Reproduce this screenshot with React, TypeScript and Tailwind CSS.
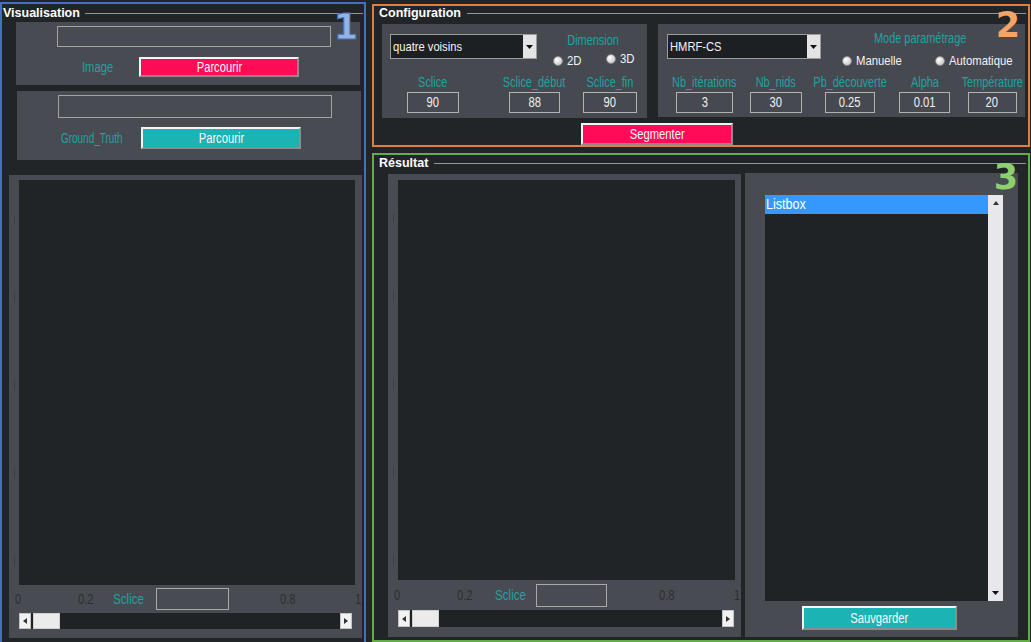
import React from "react";

function TriLeft() {
  return (
    <svg width="4" height="6" viewBox="0 0 4 6"><path d="M4 0 L0 3 L4 6 Z" fill="#333" /></svg>
  );
}
function TriRight() {
  return (
    <svg width="4" height="6" viewBox="0 0 4 6"><path d="M0 0 L4 3 L0 6 Z" fill="#333" /></svg>
  );
}
function TriUp() {
  return (
    <svg width="6" height="4" viewBox="0 0 6 4"><path d="M0 4 L3 0 L6 4 Z" fill="#333" /></svg>
  );
}
function TriDown() {
  return (
    <svg width="7" height="4" viewBox="0 0 7 4"><path d="M0 0 L7 0 L3.5 4 Z" fill="#111" /></svg>
  );
}

function Radio({ label }: { label: string }) {
  return (
    <div className="flex items-center gap-[4px]">
      <div className="w-[10px] h-[10px] shrink-0 rounded-full bg-[radial-gradient(circle_at_35%_35%,#ffffff,#b9b9b9)] border border-[#8d8d8d]" />
      <span className="inline-block whitespace-nowrap origin-left scale-x-[0.87] text-[13px] leading-[14px] text-[#f2f2f2]">{label}</span>
    </div>
  );
}

function Dropdown({ w, text }: { w: string; text: string }) {
  return (
    <div className={`${w} h-[25px] flex bg-[#1d2023] border border-[#9c9c9c]`}>
      <div className="flex-1 flex items-center pl-[2px] text-[13px] text-[#f4f4f4] overflow-hidden">
        <span className="inline-block whitespace-nowrap origin-left scale-x-[0.86]">{text}</span>
      </div>
      <div className="w-[13px] bg-[#e4e4e4] flex items-center justify-center">
        <TriDown />
      </div>
    </div>
  );
}

function Field({ w, value }: { w: string; value: string }) {
  return (
    <div className={`${w} h-[21px] border border-[#b3b3b3] flex items-center justify-center text-[14px] text-[#f0f0f0]`}>
      <span className="inline-block scale-x-[0.8]">{value}</span>
    </div>
  );
}

function ParamCol({ w, ml, label, fw, value }: { w: string; ml: string; label: string; fw: string; value: string }) {
  return (
    <div className={`${w} ${ml} flex flex-col items-center`}>
      <span className="inline-block h-[14px] leading-[14px] text-[14px] text-[#20a2a2] whitespace-nowrap scale-x-[0.78]">{label}</span>
      <div className="mt-[3px]">
        <Field w={fw} value={value} />
      </div>
    </div>
  );
}

function Scrollbar({ w, h }: { w: string; h: string }) {
  return (
    <div className={`${w} ${h} flex bg-[#1f2326]`}>
      <div className="w-[12px] bg-[#f2f2f2] border border-[#c4c4c4] flex items-center justify-center">
        <TriLeft />
      </div>
      <div className="ml-[2px] w-[27px] bg-[#ebebeb] border border-[#cfcfcf]" />
      <div className="flex-1" />
      <div className="w-[12px] bg-[#f2f2f2] border border-[#c4c4c4] flex items-center justify-center">
        <TriRight />
      </div>
    </div>
  );
}

function Tick({ w, text }: { w: string; text: string }) {
  return (
    <span className={`${w} shrink-0`}>
      <span className="inline-block whitespace-nowrap origin-left scale-x-[0.8]">{text}</span>
    </span>
  );
}

function Axes({ right }: { right?: boolean }) {
  return (
    <div className="w-[353px] h-[463px] bg-[#484b51] flex flex-col shrink-0">
      <div className="flex">
        <div className="w-[10px] flex flex-col items-center">
          <div className="mt-[40px] w-px h-[8px] bg-[#3a3d42]" />
          <div className="mt-[70px] w-px h-[8px] bg-[#3a3d42]" />
          <div className="mt-[80px] w-px h-[8px] bg-[#3a3d42]" />
          <div className="mt-[80px] w-px h-[8px] bg-[#3a3d42]" />
          <div className="mt-[80px] w-px h-[8px] bg-[#3a3d42]" />
        </div>
        <div className={right ? "mt-[6px] w-[337px] h-[400px] bg-[#202427]" : "mt-[5px] w-[336px] h-[405px] bg-[#202427]"} />
      </div>
      <div className={right ? "h-[30px] flex items-center text-[14px] text-[#2c2f33]" : "h-[28px] flex items-center text-[14px] text-[#2c2f33]"}>
        <span className="w-[6px] shrink-0" />
        <Tick w="w-[63px]" text="0" />
        <Tick w={right ? "w-[38px]" : "w-[35px]"} text="0.2" />
        <span className={right ? "w-[41px] shrink-0 text-[14px] text-[#20a2a2]" : "w-[43px] shrink-0 text-[14px] text-[#20a2a2]"}>
          <span className="inline-block whitespace-nowrap origin-left scale-x-[0.83]">Sclice</span>
        </span>
        <div className={right ? "w-[71px] h-[23px] shrink-0 border border-[#a9a9a9]" : "w-[73px] h-[22px] shrink-0 border border-[#a9a9a9]"} />
        <span className={right ? "w-[52px] shrink-0" : "w-[51px] shrink-0"} />
        <Tick w="w-[75px]" text="0.8" />
        <Tick w="w-[6px]" text="1" />
      </div>
      <div className="ml-[10px]">
        <Scrollbar w={right ? "w-[336px]" : "w-[333px]"} h={right ? "h-[17px]" : "h-[16px]"} />
      </div>
    </div>
  );
}

function Button({ color, w, h, text }: { color: "red" | "teal"; w: string; h: string; text: string }) {
  const bg = color === "red" ? "bg-[#ff0b58]" : "bg-[#1bb3b3]";
  return (
    <div
      className={`${w} ${h} ${bg} border-2 border-t-[#f4f4f4] border-l-[#f4f4f4] border-b-[#8c8c8c] border-r-[#8c8c8c] flex items-center justify-center text-[14px] text-[#fafafa]`}
    >
      <span className="inline-block whitespace-nowrap scale-x-[0.8]">{text}</span>
    </div>
  );
}

export default function App() {
  return (
    <div className="w-[1031px] h-[642px] overflow-hidden bg-[#212528] flex gap-[6px] font-['Liberation_Sans',sans-serif]">
      {/* Visualisation */}
      <div className="relative mt-[2px] w-[366px] h-[660px] shrink-0 border-2 border-[#4670bf] flex flex-col">
        <div className="h-[18px] flex items-center pl-[1px]">
          <span className="font-bold text-[12.5px] text-white">Visualisation</span>
          <div className="flex-1 h-px bg-[#8f979e] ml-[5px] mr-[1px]" />
        </div>
        <div className="absolute right-[6px] top-[6px] font-['DejaVu_Sans',sans-serif] font-bold text-[35px] leading-none text-[#93b4e6] [-webkit-text-stroke:1px_#4a6fae]">
          1
        </div>
        <div className="ml-[14px] w-[344px] h-[63px] bg-[#484b51] flex flex-col pt-[4px]">
          <div className="ml-[41px] w-[274px] h-[21px] border border-[#a3a3a3]" />
          <div className="mt-[10px] h-[20px] flex items-center">
            <span className="ml-[66px] w-[57px] shrink-0 text-[14px] text-[#20a2a2]">
              <span className="inline-block whitespace-nowrap origin-left scale-x-[0.8]">Image</span>
            </span>
            <Button color="red" w="w-[160px]" h="h-[20px]" text="Parcourir" />
          </div>
        </div>
        <div className="mt-[6px] ml-[15px] w-[344px] h-[69px] bg-[#484b51] flex flex-col pt-[4px]">
          <div className="ml-[41px] w-[274px] h-[23px] border border-[#a3a3a3]" />
          <div className="mt-[9px] h-[22px] flex items-center">
            <span className="ml-[44px] w-[80px] shrink-0 text-[14px] text-[#20a2a2]">
              <span className="inline-block whitespace-nowrap origin-left scale-x-[0.71]">Ground_Truth</span>
            </span>
            <Button color="teal" w="w-[160px]" h="h-[22px]" text="Parcourir" />
          </div>
        </div>
        <div className="mt-[15px] ml-[7px]">
          <Axes />
        </div>
      </div>

      {/* Right column */}
      <div className="w-[658px] shrink-0 flex flex-col">
        {/* Configuration */}
        <div className="relative mt-[4px] h-[145px] border-2 border-[#e57d38] flex flex-col">
          <div className="h-[14px] flex items-center pl-[5px]">
            <span className="font-bold text-[12.5px] text-white">Configuration</span>
            <div className="flex-1 h-px bg-[#8f979e] ml-[6px] mr-[2px]" />
          </div>
          <div className="absolute right-[8px] top-[2px] font-['DejaVu_Sans',sans-serif] font-bold text-[35px] leading-none text-[#f3a466]">
            2
          </div>
          <div className="mt-[4px] ml-[8px] flex gap-[11px]">
            {/* sub panel 1 */}
            <div className="w-[265px] h-[94px] bg-[#464950] flex flex-col pt-[10px]">
              <div className="flex items-start h-[34px]">
                <div className="ml-[8px]">
                  <Dropdown w="w-[147px]" text="quatre voisins" />
                </div>
                <div className="ml-[11px] w-[90px] flex flex-col items-center">
                  <span className="inline-block h-[12px] leading-[12px] text-[14px] text-[#20a2a2] scale-x-[0.78]">Dimension</span>
                  <div className="mt-[8px] w-full flex">
                    <div className="ml-[5px] w-[53px] shrink-0">
                      <Radio label="2D" />
                    </div>
                    <div className="-mt-[2px] shrink-0">
                      <Radio label="3D" />
                    </div>
                  </div>
                </div>
              </div>
              <div className="mt-[7px] flex">
                <ParamCol w="w-[74px]" ml="ml-[14px]" label="Sclice" fw="w-[52px]" value="90" />
                <ParamCol w="w-[75px]" ml="ml-[27px]" label="Sclice_début" fw="w-[51px]" value="88" />
                <ParamCol w="w-[68px]" ml="ml-[4px]" label="Sclice_fin" fw="w-[54px]" value="90" />
              </div>
            </div>
            {/* sub panel 2 */}
            <div className="w-[367px] h-[93px] bg-[#464950] flex flex-col pt-[10px]">
              <div className="flex items-start h-[34px]">
                <div className="ml-[9px]">
                  <Dropdown w="w-[154px]" text="HMRF-CS" />
                </div>
                <div className="ml-[9px] w-[180px] flex flex-col items-center -mt-[2px]">
                  <span className="inline-block h-[12px] leading-[12px] text-[14px] text-[#20a2a2] whitespace-nowrap scale-x-[0.78]">Mode paramétrage</span>
                  <div className="mt-[10px] w-full flex">
                    <div className="ml-[12px] w-[93px] shrink-0">
                      <Radio label="Manuelle" />
                    </div>
                    <div className="shrink-0">
                      <Radio label="Automatique" />
                    </div>
                  </div>
                </div>
              </div>
              <div className="mt-[7px] flex">
                <ParamCol w="w-[75px]" ml="ml-[9px]" label="Nb_itérations" fw="w-[57px]" value="3" />
                <ParamCol w="w-[68px]" ml="ml-[0px]" label="Nb_nids" fw="w-[52px]" value="30" />
                <ParamCol w="w-[80px]" ml="ml-[0px]" label="Pb_découverte" fw="w-[50px]" value="0.25" />
                <ParamCol w="w-[69px]" ml="ml-[0px]" label="Alpha" fw="w-[51px]" value="0.01" />
                <ParamCol w="w-[66px]" ml="ml-[0px]" label="Température" fw="w-[49px]" value="20" />
              </div>
            </div>
          </div>
          <div className="mt-[5px] ml-[207px]">
            <Button color="red" w="w-[152px]" h="h-[22px]" text="Segmenter" />
          </div>
        </div>

        {/* Résultat */}
        <div className="relative mt-[6px] h-[500px] border-2 border-[#62ad46] flex flex-col">
          <div className="h-[16px] flex items-center pl-[5px]">
            <span className="font-bold text-[12.5px] text-white">Résultat</span>
            <div className="flex-1 h-px bg-[#8f979e] ml-[6px] mr-[2px]" />
          </div>
          <div className="absolute right-[10px] top-[5px] font-['DejaVu_Sans',sans-serif] font-bold text-[35px] leading-none text-[#8fd06e]">
            3
          </div>
          <div className="mt-[3px] pl-[14px] flex items-start gap-[4px]">
            <Axes right />
            <div className="-mt-[1px] w-[273px] h-[464px] bg-[#484b51] flex flex-col pt-[22px] pl-[20px]">
              <div className="w-[238px] h-[406px] flex bg-[#1f2326]">
                <div className="flex-1">
                  <div className="h-[19px] bg-[#3399ff] flex items-center pl-[1px] text-[14px] text-white">
                    <span className="inline-block whitespace-nowrap origin-left scale-x-[0.9]">Listbox</span>
                  </div>
                </div>
                <div className="w-[15px] bg-[#e8e8ec] flex flex-col items-center justify-between py-[6px]">
                  <TriUp />
                  <TriDown />
                </div>
              </div>
              <div className="mt-[5px] ml-[37px]">
                <Button color="teal" w="w-[155px]" h="h-[24px]" text="Sauvgarder" />
              </div>
            </div>
          </div>
        </div>
      </div>
    </div>
  );
}
